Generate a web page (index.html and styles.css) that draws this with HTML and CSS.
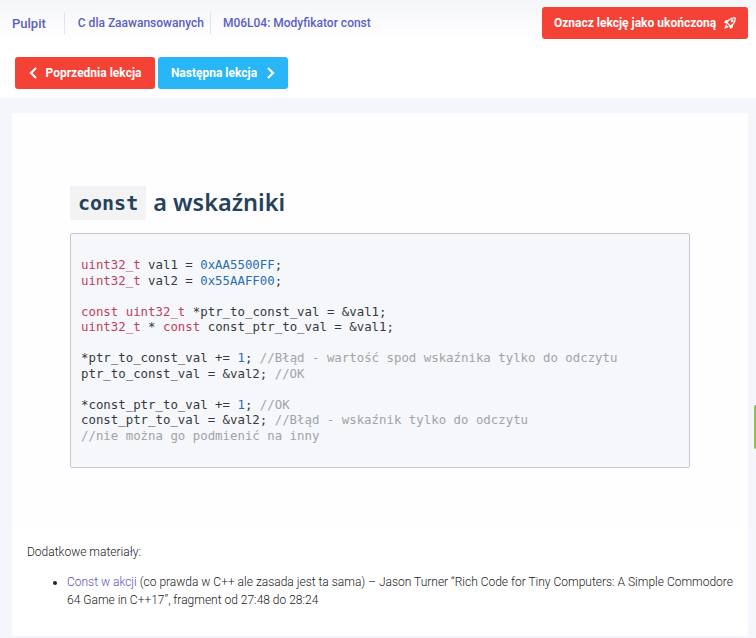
FILE: index.html
```html
<!DOCTYPE html>
<html lang="pl">
<head>
    <meta charset="UTF-8">
    <meta name="viewport" content="width=device-width, initial-scale=1.0">
    <title>M06L04: Modyfikator const</title>
    <link rel="stylesheet" href="styles.css">
</head>
<body>

    <!-- Header -->
    <div class="header">
        <div class="top-row">
            <nav class="crumbs">
                <a href="#" class="crumb crumb-home">Pulpit</a>
                <a href="#" class="crumb crumb-course">C dla Zaawansowanych</a>
                <a href="#" class="crumb crumb-lesson">M06L04: Modyfikator const</a>
            </nav>
            <a href="#" class="button button-red button-done">
                Oznacz lekcję jako ukończoną
                <svg class="rocket" width="12" height="12" viewBox="0 0 14 14" fill="none" stroke="currentColor" stroke-width="1.500" stroke-linejoin="round" stroke-linecap="round">
                    <path d="M13 1c-3.300-.3-5.700.6-7.700 2.800L3 6.200l4.800 4.800 2.400-2.300C12.400 6.700 13.300 4.300 13 1z"/>
                    <path d="M5 4.300H2.600L1 6.400l2.200.6M9.700 9v2.400L7.600 13 7 10.800"/>
                    <circle cx="9.500" cy="4.500" r="1"/>
                    <path d="M2.700 9.500 1.200 12.800 4.500 11.300"/>
                </svg>
            </a>
        </div>
        <div class="lesson-nav">
            <a href="#" class="button button-red">
                <svg class="chevron" width="9" height="12" viewBox="0 0 9 12" fill="none" stroke="currentColor" stroke-width="2.200"><path d="M7 1 2 6l5 5"/></svg>
                Poprzednia lekcja
            </a>
            <a href="#" class="button button-blue">
                Następna lekcja
                <svg class="chevron" width="9" height="12" viewBox="0 0 9 12" fill="none" stroke="currentColor" stroke-width="2.200"><path d="M2 1l5 5-5 5"/></svg>
            </a>
        </div>
    </div>

    <!-- Lesson content -->
    <div class="card">
        <div class="article">
            <h2><code>const</code> <span class="heading-text">a wskaźniki</span></h2>
            <pre class="code"><span class="key">uint32_t</span> val1 = <span class="num">0xAA5500FF</span>;
<span class="key">uint32_t</span> val2 = <span class="num">0x55AAFF00</span>;

<span class="key">const</span> <span class="key">uint32_t</span> *ptr_to_const_val = &amp;val1;
<span class="key">uint32_t</span> * <span class="key">const</span> const_ptr_to_val = &amp;val1;

*ptr_to_const_val += <span class="num">1</span>; <span class="comment">//Błąd - wartość spod wskaźnika tylko do odczytu</span>
ptr_to_const_val = &amp;val2; <span class="comment">//OK</span>

*const_ptr_to_val += <span class="num">1</span>; <span class="comment">//OK</span>
const_ptr_to_val = &amp;val2; <span class="comment">//Błąd - wskaźnik tylko do odczytu</span>
<span class="comment">//nie można go podmienić na inny</span></pre>
        </div>

        <div class="extras">
            <p>Dodatkowe materiały:</p>
            <ul>
                <li><a href="#">Const w akcji</a> (co prawda w C++ ale zasada jest ta sama) – Jason Turner “Rich Code for Tiny Computers: A Simple Commodore 64 Game in C++17”, fragment od 27:48 do 28:24</li>
            </ul>
        </div>
    </div>

    <div class="side-tab"></div>

</body>
</html>
```

FILE: styles.css
```css
html, body {
    height: 100%;
}

body {
    font-family: Roboto, "Liberation Sans", sans-serif;
    background-color: #f5f6fb;
    margin: 0;
    overflow: hidden;
}

a {
    text-decoration: none;
}

.header {
    height: 98px;
    background: linear-gradient(#f5f6fa, #ffffff 40px);
}

.top-row {
    display: flex;
    justify-content: space-between;
    align-items: flex-start;
    padding: 7px 8px 0 12px;
}

.crumbs {
    display: flex;
    align-items: center;
    height: 32px;
}

.crumb {
    color: #5a60c4;
    font-size: 12px;
    font-weight: 500;
    display: flex;
    align-items: center;
    height: 22px;
}

.crumb-home {
    font-size: 13px;
    padding-right: 18px;
    border-right: 1px solid #e2e4ee;
}

.crumb-course {
    padding: 0 6px 0 13px;
    border-right: 1px solid #e2e4ee;
}

.crumb-lesson {
    padding-left: 12px;
}

.button {
    display: flex;
    align-items: center;
    justify-content: center;
    height: 32px;
    box-sizing: border-box;
    border-radius: 3px;
    color: white;
    font-size: 12px;
    font-weight: 700;
}

.button-red {
    background-color: #f44336;
}

.button-blue {
    background-color: #29b6f6;
}

.button-done {
    width: 206px;
    gap: 8px;
}

.lesson-nav {
    display: flex;
    gap: 3px;
    padding: 18px 0 0 15px;
}

.lesson-nav .button-red {
    width: 140px;
    gap: 8px;
}

.lesson-nav .button-blue {
    width: 130px;
    gap: 9px;
}

.card {
    margin: 15px 8px 0 12px;
    height: 523px;
    background-color: white;
    border-radius: 3px;
    overflow: hidden;
}

.article {
    height: 415px;
    padding: 73px 58px 0;
    box-sizing: border-box;
    background-color: #fefdff;
}

h2 {
    margin: 0;
    height: 34px;
    display: flex;
    align-items: center;
    gap: 7px;
    font-family: "Noto Sans", "Open Sans", sans-serif;
    font-size: 23.500px;
    font-weight: 600;
    color: #24425c;
}

.heading-text {
    margin-bottom: 3px;
}

h2 code {
    font-family: "DejaVu Sans Mono", monospace;
    font-size: 20px;
    font-weight: 700;
    line-height: 34px;
    padding: 0 8px;
    background-color: #f3f3f3;
}

.code {
    margin: 13px 0 0;
    width: 620px;
    height: 235px;
    box-sizing: border-box;
    padding: 24px 10px 0;
    background-color: #f5f7fa;
    border: 1px solid #c8c8cc;
    border-radius: 2px;
    font-family: "DejaVu Sans Mono", monospace;
    font-size: 12.380px;
    line-height: 15.500px;
    color: #333a40;
}

.key {
    color: #c0405c;
}

.num {
    color: #2c6cb0;
}

.comment {
    color: #a0a4a8;
}

.extras {
    padding: 15px 15px 0;
    font-size: 12px;
    font-weight: 300;
    line-height: 18px;
    color: #222;
}

.extras p {
    margin: 0 0 12px;
}

.extras ul {
    margin: 0;
    padding-left: 40px;
}

.extras a {
    color: #5a50c0;
}

.side-tab {
    position: absolute;
    right: 0;
    top: 405px;
    width: 2px;
    height: 44px;
    background-color: #8bc34a;
    border-radius: 2px 0 0 2px;
}
```
